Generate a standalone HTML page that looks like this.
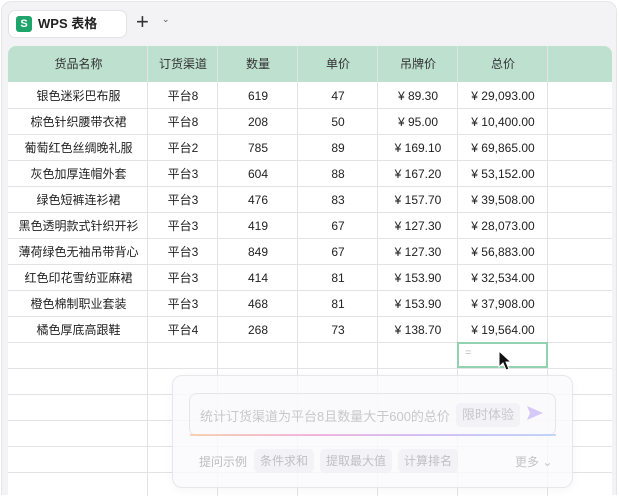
<!DOCTYPE html>
<html><head><meta charset="utf-8"><style>
*{margin:0;padding:0;box-sizing:border-box}
html,body{width:619px;height:496px;overflow:hidden}
body{background:#fff;font-family:"Liberation Sans","Noto Sans CJK SC",sans-serif;position:relative}
.frame{position:absolute;left:1px;top:1px;width:616px;height:494px;background:#f3f3f5;border:1px solid #e6e6ea;border-radius:10px 10px 0 0;border-bottom:none}
.tab{position:absolute;left:8px;top:10px;width:119px;height:28px;background:#fff;border:1px solid #e2e2e6;border-radius:7px;font-size:13px;font-weight:bold;color:#222}
.tab .s{position:absolute;left:7px;top:5px;width:16px;height:16px;background:#1fa56b;border-radius:3px;color:#fff;font-size:11px;text-align:center;line-height:16px}
.tab .t{position:absolute;left:29px;top:5px;line-height:16px}
.plus{position:absolute;left:136px;top:9px;font-size:22px;color:#333;line-height:26px}
.chev{position:absolute;left:162px;top:14px;font-size:9px;color:#555}
.tbl{position:absolute;left:8px;top:46px;width:604px;height:450px;background:#fff;border-radius:8px 8px 0 0;overflow:hidden}
.hdr{position:absolute;left:0;top:0;width:604px;height:36px;background:#bde0cf}
.vl{position:absolute;top:0;width:1px;height:460px;background:#e3e3e6}
.hl{position:absolute;left:0;width:604px;height:1px;background:#e3e3e6}
.c{position:absolute;font-size:12px;color:#222;text-align:center;line-height:26px;height:26px;white-space:nowrap}
.h{line-height:36px;height:36px;color:#333}
.sel{position:absolute;left:457px;top:342px;width:91px;height:26px;border:2px solid #93d2b0}
.panel{position:absolute;left:172px;top:375px;width:401px;height:113px;background:rgba(250,250,252,0.8);border:1px solid rgba(225,225,230,0.8);border-radius:10px;box-shadow:0 2px 10px rgba(0,0,0,0.04)}
.inp{position:absolute;left:189px;top:393px;width:367px;height:43px;background:rgba(250,250,252,0.7);border:1px solid rgba(225,225,230,0.8);border-radius:8px}
.grad{position:absolute;left:190px;top:434px;width:366px;height:2px;background:linear-gradient(90deg,#f8c9a0,#f0a6d8,#c9b6f5,#b5cdf8);opacity:.8}
.pt{position:absolute;font-size:13px;color:#c8c8cc;white-space:nowrap}
.chip{position:absolute;top:449px;height:24px;line-height:24px;padding:0 6px;background:rgba(240,240,243,0.7);border-radius:5px;font-size:12px;color:#c0c0c4}
</style></head><body>
<div class="frame"></div>
<div class="tab"><div class="s">S</div><div class="t">WPS 表格</div></div>
<div class="plus">+</div><div class="chev">⌄</div>
<div class="tbl">
<div class="hdr"></div>
<div class="vl" style="left:139px"></div><div class="vl" style="left:209px"></div><div class="vl" style="left:289px"></div><div class="vl" style="left:369px"></div><div class="vl" style="left:449px"></div><div class="vl" style="left:539px"></div>
<div class="hl" style="top:62px"></div><div class="hl" style="top:88px"></div><div class="hl" style="top:114px"></div><div class="hl" style="top:140px"></div><div class="hl" style="top:166px"></div><div class="hl" style="top:192px"></div><div class="hl" style="top:218px"></div><div class="hl" style="top:244px"></div><div class="hl" style="top:270px"></div><div class="hl" style="top:296px"></div><div class="hl" style="top:322px"></div><div class="hl" style="top:348px"></div><div class="hl" style="top:374px"></div><div class="hl" style="top:400px"></div><div class="hl" style="top:426px"></div>
</div>
<div id="cells"></div>
<div class="sel"><span style="position:absolute;left:6px;top:3px;font-size:11px;color:#bbb">=</span></div>
<svg style="position:absolute;left:498px;top:350px" width="16" height="22" viewBox="0 0 16 22"><path d="M1 1 L1 17 L5 13 L8 20 L11 19 L8 12 L13 12 Z" fill="#111" stroke="#fff" stroke-width="1"/></svg>
<div class="panel"></div>
<div class="inp"></div>
<div class="grad"></div>
<div class="pt" style="left:200px;top:406px">统计订货渠道为平台8且数量大于600的总价</div>
<div class="chip" style="left:456px;top:403px;color:#c8c8cc;font-size:13px">限时体验</div>
<svg style="position:absolute;left:526px;top:404px" width="18" height="18" viewBox="0 0 18 18"><path d="M1 2 L17 9 L1 16 L4 9 Z" fill="#d6c8f7"/></svg>
<div class="pt" style="left:199px;top:453px;font-size:12px;color:#bcbcc0">提问示例</div>
<div class="chip" style="left:254px">条件求和</div>
<div class="chip" style="left:320px">提取最大值</div>
<div class="chip" style="left:398px">计算排名</div>
<div class="pt" style="left:515px;top:453px;font-size:12px;color:#c4c4c8">更多 ⌄</div>
<script>
var cols=[[9,139],[148,70],[218,80],[298,80],[378,80],[458,90]];
var H=["货品名称","订货渠道","数量","单价","吊牌价","总价"];
var R=[["银色迷彩巴布服","平台8","619","47","¥ 89.30","¥ 29,093.00"],["棕色针织腰带衣裙","平台8","208","50","¥ 95.00","¥ 10,400.00"],["葡萄红色丝绸晚礼服","平台2","785","89","¥ 169.10","¥ 69,865.00"],["灰色加厚连帽外套","平台3","604","88","¥ 167.20","¥ 53,152.00"],["绿色短裤连衫裙","平台3","476","83","¥ 157.70","¥ 39,508.00"],["黑色透明款式针织开衫","平台3","419","67","¥ 127.30","¥ 28,073.00"],["薄荷绿色无袖吊带背心","平台3","849","67","¥ 127.30","¥ 56,883.00"],["红色印花雪纺亚麻裙","平台3","414","81","¥ 153.90","¥ 32,534.00"],["橙色棉制职业套装","平台3","468","81","¥ 153.90","¥ 37,908.00"],["橘色厚底高跟鞋","平台4","268","73","¥ 138.70","¥ 19,564.00"]];
var h="";
H.forEach(function(t,i){h+='<div class="c h" style="left:'+cols[i][0]+'px;top:46px;width:'+cols[i][1]+'px">'+t+'</div>';});
R.forEach(function(r,j){r.forEach(function(t,i){h+='<div class="c" style="left:'+cols[i][0]+'px;top:'+(83+j*26)+'px;width:'+cols[i][1]+'px">'+t+'</div>';});});
document.getElementById("cells").innerHTML=h;
</script>
</body></html>
